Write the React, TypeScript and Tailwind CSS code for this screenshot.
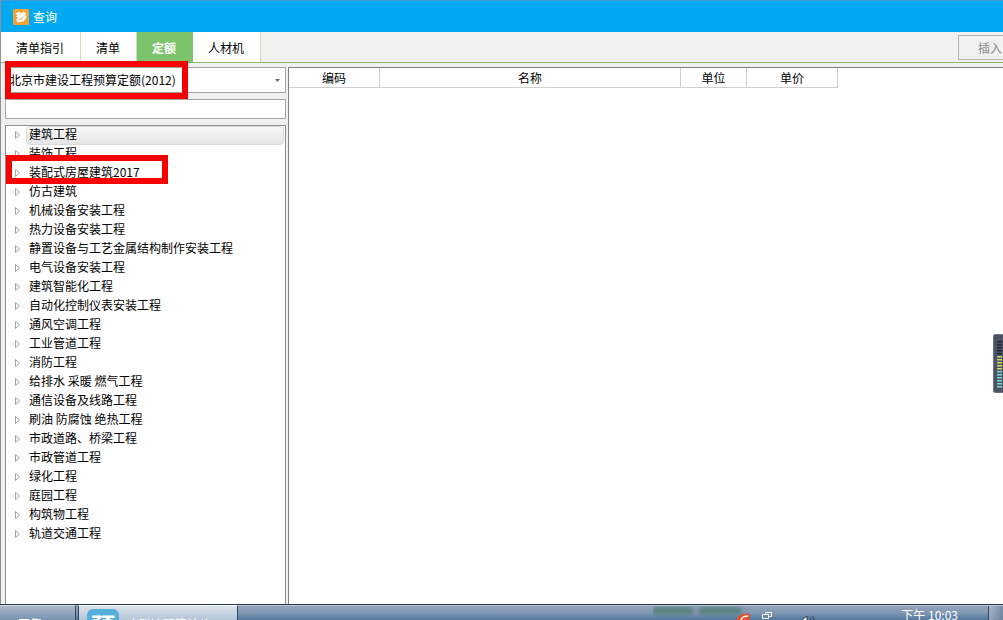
import React from "react";

const tree = [
  "建筑工程", "装饰工程", "装配式房屋建筑2017", "仿古建筑", "机械设备安装工程", "热力设备安装工程",
  "静置设备与工艺金属结构制作安装工程", "电气设备安装工程", "建筑智能化工程", "自动化控制仪表安装工程",
  "通风空调工程", "工业管道工程", "消防工程", "给排水 采暖 燃气工程", "通信设备及线路工程",
  "刷油 防腐蚀 绝热工程", "市政道路、桥梁工程", "市政管道工程", "绿化工程", "庭园工程", "构筑物工程", "轨道交通工程",
];

const tabs = [
  { label: "清单指引", width: "w-20" },
  { label: "清单", width: "w-14" },
  { label: "定额", width: "w-14", active: true },
  { label: "人材机", width: "w-[68px]" },
];

const columns = [
  { label: "编码", width: "w-[91px]" },
  { label: "名称", width: "w-[301px]" },
  { label: "单位", width: "w-[66px]" },
  { label: "单价", width: "w-[91px]" },
];

function Logo() {
  return (
    <svg className="h-4 w-4" viewBox="0 0 16 16" aria-hidden="true">
      <rect width="16" height="16" rx="1.5" fill="#f5a336" />
      <path d="M2.4 5 C4.6 2.6 7 2.4 8 3.6 L6.6 6 L10.4 2.4 L13.4 4.6 L11 6.4 L13.4 6.6 C13.4 10.8 9.8 13.8 5.8 13.2 C3.4 12.8 2.8 11 4 9.6 L5.6 8.2 L3 8 L4.8 5.8 Z" fill="#fff" />
      <path d="M5.8 11.2 L10.4 8.4" stroke="#f5a336" strokeWidth="1" />
    </svg>
  );
}

function Header() {
  return (
    <header className="flex h-8 shrink-0 items-center gap-1 border-t border-[#3f9fd0] bg-[#00a9f2] pl-3 text-white">
      <Logo />
      <h1>查询</h1>
    </header>
  );
}

function Tabs() {
  return (
    <nav className="flex h-[31px] shrink-0 border-b border-[#7fbf6c]">
      {tabs.map((t) => (
        <button
          key={t.label}
          type="button"
          className={`${t.width} border-r pt-0.5 pr-px ${t.active ? "border-[#7dc36b] bg-[#7dc36b] font-bold text-white" : "border-[#c4e2ba] bg-white"}`}
        >
          {t.label}
        </button>
      ))}
      <div className="flex flex-1 justify-end overflow-hidden pt-[3px]">
        <button type="button" className="-mr-[19px] h-[25px] w-16 shrink-0 border border-[#b5b5b5] text-[#8a8a8a]">
          插入
        </button>
      </div>
    </nav>
  );
}

function Sidebar() {
  return (
    <aside className="flex w-[281px] shrink-0 flex-col">
      <div className="relative">
        <select
          aria-label="定额库"
          className="block h-[26px] w-full appearance-none border border-[#a5a5a5] bg-white pl-[3px] outline-none"
        >
          <option>北京市建设工程预算定额(2012)</option>
        </select>
        <svg className="pointer-events-none absolute top-3 right-1.5 h-[3px] w-[5px]" viewBox="0 0 5 3" aria-hidden="true">
          <path d="M0 0H5L2.5 3Z" fill="#666" />
        </svg>
        <div className="pointer-events-none absolute -top-1.5 left-0 h-[38px] w-[183px] border-6 border-[#f70000]" />
      </div>
      <input
        aria-label="搜索"
        type="text"
        className="mt-1.5 h-5 w-full border border-[#a5a5a5] bg-white px-1 outline-none"
      />
      <ul className="mt-1.5 min-h-0 flex-1 border border-b-0 border-[#8c8c8c] bg-white">
        {tree.map((name, i) => (
          <li key={name} className="relative flex h-[19px]">
            <button type="button" className="flex w-full items-center text-left">
              <svg className="mb-0.5 ml-[9px] h-2 w-[5px] shrink-0" viewBox="0 0 5 8" aria-hidden="true">
                <path d="M0.5 0.5V7.5L4.5 4Z" fill="#fff" stroke="#979797" strokeWidth="0.9" />
              </svg>
              <span
                className={`mr-px ml-1.5 flex h-full flex-1 items-center rounded-sm border pb-1 pl-0.5 ${i === 0 ? "border-[#d9d9d9] bg-linear-to-b from-[#f8f8f8] to-[#e5e5e5]" : "border-transparent"}`}
              >
                {name}
              </span>
            </button>
            {i === 2 && (
              <div className="pointer-events-none absolute -top-[9px] left-0 z-10 h-[29px] w-[162px] border-6 border-[#f70000]" />
            )}
          </li>
        ))}
      </ul>
    </aside>
  );
}

function Results() {
  return (
    <main className="min-w-0 flex-1 border-t border-l border-[#808080] bg-white">
      <table className="table-fixed border-separate border-spacing-0">
        <thead>
          <tr className="h-5">
            {columns.map((c) => (
              <th key={c.label} className={`${c.width} border-r border-b border-[#cfcfcf] p-0 font-normal`}>
                {c.label}
              </th>
            ))}
          </tr>
        </thead>
      </table>
    </main>
  );
}

function Meter() {
  const bars = Array.from({ length: 16 }, (_, i) => i);
  return (
    <svg className="absolute top-[334px] right-0 h-[59px] w-2.5" viewBox="0 0 10 59" aria-hidden="true">
      <path d="M10 0H3Q0 0 0 3V56Q0 59 3 59H10Z" fill="#4b5266" />
      <path d="M10 .5H3Q.5 .5 .5 3V56Q.5 58.5 3 58.5H10" fill="none" stroke="#6d7386" />
      {bars.map((i) => (
        <rect key={i} x="4" y={7 + i * 3} width="5" height="1.5" fill={i < 5 ? "#22283a" : i < 10 ? "#d3dc5e" : "#77ddd0"} />
      ))}
    </svg>
  );
}

function Taskbar() {
  return (
    <footer className="flex h-4 shrink-0 items-start overflow-hidden border-t border-[#26384c] bg-linear-to-b from-[#92a5bb] via-[#8298b3] to-[#52779f] text-white">
      <button type="button" className="flex h-8 w-[76px] shrink-0 overflow-hidden border-t border-r border-[#2f4660] border-t-[#d0dae5] bg-linear-to-b from-[#a9b8c8] to-[#40678f] pt-2.5 pl-[18px]">
        网集
      </button>
      <button type="button" className="ml-0.5 flex h-8 w-40 shrink-0 gap-2 overflow-hidden border border-[#2f4660] border-t-white bg-linear-to-b from-[#dde4eb] to-[#86a2be] pl-2">
        <span className="mt-[3px] h-8 w-8 shrink-0 rounded-md bg-[#55aedb] text-center text-2xl font-bold">预</span>
        <span className="pt-2.5">广联达预算计价</span>
      </button>
      <div className="flex flex-1 justify-end border-t border-[#b9c7d5]">
        <svg className="mr-[50px] h-[14px] w-[216px] shrink-0" viewBox="0 0 216 14" aria-hidden="true">
          <path className="blur-[2px]" d="M0 1H40V9H0Z M46 1H88V9H46Z" fill="#557f7e" opacity=".9" />
          <path d="M83 14Q88 6 97 8L96 14Z" fill="#f04b20" />
          <path d="M88 14Q89 10 95 10" fill="none" stroke="#fff" strokeWidth="1.5" />
          <path d="M112.5 7.5V6.5H118.5V10.5H116.5M109.5 8.5H115.5V12.5H109.5Z" fill="none" stroke="#fff" />
          <path d="M149 14L154 10V14M156 11Q158 12 158 14M159 10Q161 12 161 14" fill="#fff" stroke="#26384c" />
        </svg>
        <time className="-ml-[18px] shrink-0 pt-px">下午 10:03</time>
        <button type="button" aria-label="显示桌面" className="ml-[30px] h-8 w-[15px] shrink-0 border-l border-[#30485f] bg-linear-to-br from-[#a9b8c8] to-[#506d8e]" />
      </div>
    </footer>
  );
}

export default function App() {
  return (
    <div className="relative flex h-screen flex-col overflow-hidden bg-[#f0f0f0] font-['Noto_Sans_CJK_SC','Liberation_Sans',sans-serif] text-xs leading-4 text-black">
      <div className="flex min-h-0 flex-1 flex-col border-l border-[#8f8f8f]">
        <Header />
        <Tabs />
        <div className="flex min-h-0 flex-1 gap-0.5 pt-1 pl-1">
          <Sidebar />
          <Results />
        </div>
      </div>
      <Taskbar />
      <Meter />
    </div>
  );
}
